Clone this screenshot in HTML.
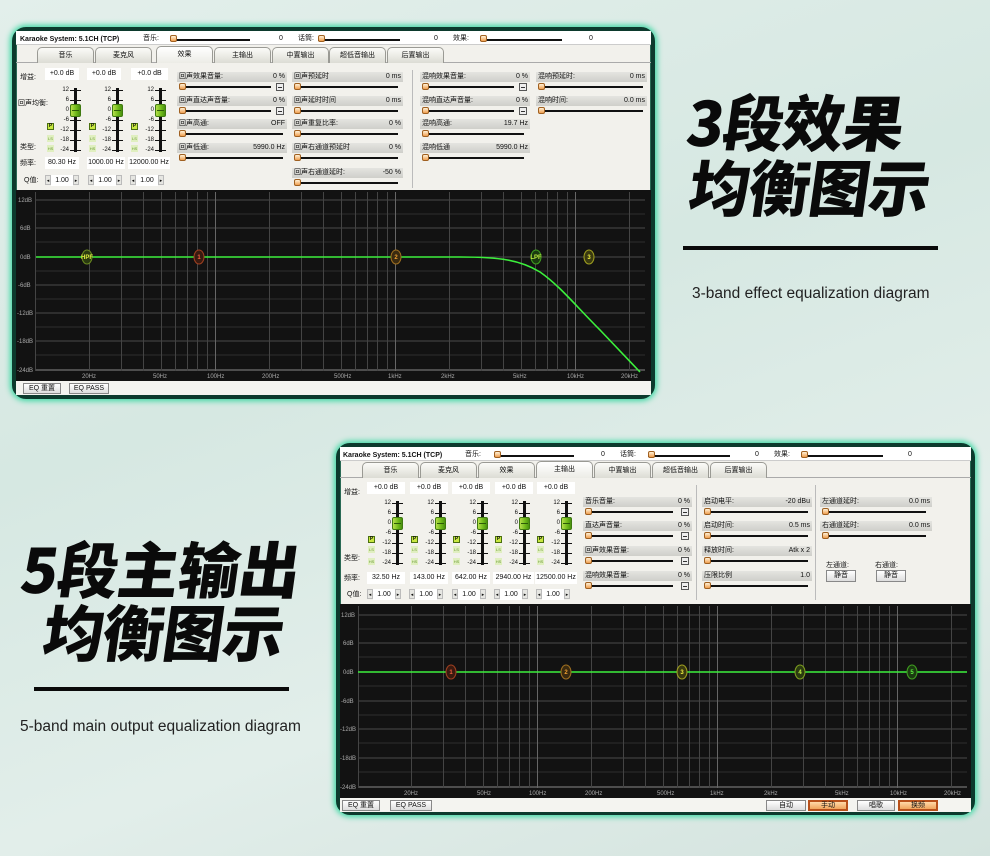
<!DOCTYPE html>
<html><head><meta charset="utf-8">
<style>
*{margin:0;padding:0;box-sizing:border-box}
body{width:990px;height:856px;overflow:hidden;position:relative;background:linear-gradient(160deg,#e3efeb 0%,#d6e8e2 40%,#e2eeea 70%,#d3e3de 100%);font-family:"Liberation Sans","Noto Sans CJK SC",sans-serif;color:#111}
.a{position:absolute}
.frame{position:absolute;border:4px solid #0c3a2d;border-radius:14px;box-shadow:0 0 6px 2px #3ed8a4,inset 0 0 0 1px #2a6a55;background:#f2f1ec;overflow:hidden}
.t7{font-size:7px;line-height:9px;white-space:nowrap}
.tb{position:absolute;height:16px;width:57px;border:1px solid #9a9a94;border-bottom:none;border-radius:5px 5px 0 0;background:linear-gradient(#fbfbf8,#dcdcd4);font-size:7px;text-align:center;line-height:15px}
.tb.on{background:linear-gradient(#ffffff,#ecece6);height:17px}
.sl{position:absolute;height:2px;background:#111}
.th{position:absolute;width:7px;height:7px;border:1px solid #a06020;border-radius:2px;background:linear-gradient(#fff2d8,#f0a050)}
.pb{position:absolute;height:21px}
.pb .lb{position:absolute;left:0;right:0;top:0;height:10px;background:linear-gradient(#e4e4e0,#cfcfca);font-size:7px;line-height:10px;padding:0 2px;white-space:nowrap}
.pb .lb span{float:right}
.pb .sl{left:2px;top:14px}
.pb .th{left:2px;top:11px}
.pb .mn{position:absolute;top:11px;width:8px;height:8px;border:1px solid #555;background:#eee}
.pb .mn:after{content:"";position:absolute;left:1px;right:1px;top:3px;height:1px;background:#333}
.vb{position:absolute;height:12px;background:#fff;font-size:7px;line-height:12px;text-align:center;white-space:nowrap}
.fd{position:absolute;width:40px;height:70px}
.fd .tk{position:absolute;left:0;top:0;width:14px;text-align:right;font-size:6px;line-height:10px;white-space:pre}
.fd .tr{position:absolute;left:19px;top:3px;width:3px;height:64px;background:#111}
.fd .ti{position:absolute;left:15px;top:5px;width:11px;height:61px;background:repeating-linear-gradient(#111 0 1px,transparent 1px 10px)}
.fd .kn{position:absolute;left:15px;top:19px;width:11px;height:13px;border:1px solid #3f7a10;border-radius:2px;background:linear-gradient(90deg,#b6e04a,#6cb818 60%,#4a9010)}
.fd .kn:after{content:"";position:absolute;left:1px;right:1px;top:5px;height:1px;background:#2d5a08}
.ic{position:absolute;width:7px;height:7px;font-size:4px;line-height:7px;text-align:center}
.ic.p{background:#c8e840;border:1px solid #4a7010;font-weight:bold;font-size:5px;line-height:5px}
.ic.s{background:#e0efc0;color:#6a9a30}
.qb{position:absolute;height:11px;font-size:7px;line-height:11px;white-space:nowrap}
.qb i{display:inline-block;width:6px;height:10px;background:#e6e6e2;border:1px solid #bbb;font-style:normal;font-size:5px;text-align:center;vertical-align:top}
.qb b{display:inline-block;width:22px;text-align:center;font-weight:normal;background:#fff}
.bt{position:absolute;height:11px;border:1px solid #888;background:linear-gradient(#fff,#ddd);font-size:7px;line-height:9px;text-align:center;white-space:nowrap}
.bt.o{background:linear-gradient(#ffd9a8,#f0a45c);border:2px solid #b8501a;line-height:7px}
.big{position:absolute;font-family:"Noto Sans CJK SC","WenQuanYi Zen Hei",sans-serif;font-weight:900;font-size:61px;line-height:61px;letter-spacing:-1px;transform:skewX(-8deg);color:#0a0a0a;white-space:nowrap}
.hr{position:absolute;height:4px;background:#0a0a0a}
.sub{position:absolute;font-family:"Liberation Sans","DejaVu Sans",sans-serif;font-size:15.5px;color:#222;white-space:nowrap}
</style></head><body>

<div class="big" style="left:688px;top:89px">3段效果</div>
<div class="big" style="left:690px;top:154px">均衡图示</div>
<div class="hr" style="left:683px;top:246px;width:255px"></div>
<div class="sub" style="left:692px;top:285px">3-band effect equalization diagram</div>

<div class="big" style="left:22px;top:536px;letter-spacing:-0.5px">5段主输出</div>
<div class="big" style="left:44px;top:599px">均衡图示</div>
<div class="hr" style="left:34px;top:687px;width:255px"></div>
<div class="sub" style="left:20px;top:718px">5-band main output equalization diagram</div>

<!-- PANEL 1 -->
<div class="frame" style="left:12px;top:27px;width:643px;height:372px"></div>
<div class="a" style="left:16px;top:31px;width:635px;height:14px;background:#fff;border-bottom:1px solid #ccc"></div>
<div class="a t7" style="left:20px;top:35px;font-weight:bold">Karaoke System: 5.1CH (TCP)</div>
<div class="a t7" style="left:143px;top:34px">音乐:</div><div class="sl" style="left:170px;top:39px;width:80px"></div><div class="th" style="left:170px;top:35px"></div><div class="a t7" style="left:279px;top:34px">0</div>
<div class="a t7" style="left:298px;top:34px">话筒:</div><div class="sl" style="left:318px;top:39px;width:82px"></div><div class="th" style="left:318px;top:35px"></div><div class="a t7" style="left:434px;top:34px">0</div>
<div class="a t7" style="left:453px;top:34px">效果:</div><div class="sl" style="left:480px;top:39px;width:82px"></div><div class="th" style="left:480px;top:35px"></div><div class="a t7" style="left:589px;top:34px">0</div>
<div class="a" style="left:16px;top:62px;width:635px;height:1px;background:#aaa"></div>
<div class="tb" style="left:37px;top:47px">音乐</div>
<div class="tb" style="left:95px;top:47px">麦克风</div>
<div class="tb on" style="left:156px;top:46px">效果</div>
<div class="tb" style="left:214px;top:47px">主输出</div>
<div class="tb" style="left:272px;top:47px">中置输出</div>
<div class="tb" style="left:329px;top:47px">超低音输出</div>
<div class="tb" style="left:387px;top:47px">后置输出</div>

<div class="a t7" style="left:20px;top:73px">增益:</div>
<div class="a t7" style="left:18px;top:99px">回声均衡:</div>
<div class="a t7" style="left:20px;top:143px">类型:</div>
<div class="a t7" style="left:20px;top:159px">频率:</div>
<div class="a t7" style="left:24px;top:176px">Q值:</div>
<div class="vb" style="left:45px;top:68px;width:34px">+0.0 dB</div>
<div class="vb" style="left:87px;top:68px;width:34px">+0.0 dB</div>
<div class="vb" style="left:131px;top:68px;width:37px">+0.0 dB</div>
<div class="fd" style="left:55px;top:85px"><div class="tk">12
6
0
-6
-12
-18
-24</div><div class="ti"></div><div class="tr"></div><div class="kn"></div></div>
<div class="fd" style="left:97px;top:85px"><div class="tk">12
6
0
-6
-12
-18
-24</div><div class="ti"></div><div class="tr"></div><div class="kn"></div></div>
<div class="fd" style="left:140px;top:85px"><div class="tk">12
6
0
-6
-12
-18
-24</div><div class="ti"></div><div class="tr"></div><div class="kn"></div></div>
<div class="ic p" style="left:47px;top:123px">P</div><div class="ic s" style="left:47px;top:135px">LS</div><div class="ic s" style="left:47px;top:145px">HS</div>
<div class="ic p" style="left:89px;top:123px">P</div><div class="ic s" style="left:89px;top:135px">LS</div><div class="ic s" style="left:89px;top:145px">HS</div>
<div class="ic p" style="left:131px;top:123px">P</div><div class="ic s" style="left:131px;top:135px">LS</div><div class="ic s" style="left:131px;top:145px">HS</div>
<div class="vb" style="left:45px;top:157px;width:34px">80.30 Hz</div>
<div class="vb" style="left:87px;top:157px;width:38px">1000.00 Hz</div>
<div class="vb" style="left:128px;top:157px;width:42px">12000.00 Hz</div>
<div class="qb" style="left:45px;top:175px"><i>◂</i><b>1.00</b><i>▸</i></div>
<div class="qb" style="left:88px;top:175px"><i>◂</i><b>1.00</b><i>▸</i></div>
<div class="qb" style="left:130px;top:175px"><i>◂</i><b>1.00</b><i>▸</i></div>

<div class="pb" style="left:177px;top:72px;width:110px"><div class="lb">回声效果音量:<span>0 %</span></div><div class="sl" style="width:92px"></div><div class="th"></div><div class="mn" style="left:99px"></div></div>
<div class="pb" style="left:177px;top:96px;width:110px"><div class="lb">回声直达声音量:<span>0 %</span></div><div class="sl" style="width:92px"></div><div class="th"></div><div class="mn" style="left:99px"></div></div>
<div class="pb" style="left:177px;top:119px;width:110px"><div class="lb">回声高通:<span>OFF</span></div><div class="sl" style="width:104px"></div><div class="th"></div></div>
<div class="pb" style="left:177px;top:143px;width:110px"><div class="lb">回声低通:<span>5990.0 Hz</span></div><div class="sl" style="width:104px"></div><div class="th"></div></div>

<div class="pb" style="left:292px;top:72px;width:111px"><div class="lb">回声预延时<span>0 ms</span></div><div class="sl" style="width:104px"></div><div class="th"></div></div>
<div class="pb" style="left:292px;top:96px;width:111px"><div class="lb">回声延时时间<span>0 ms</span></div><div class="sl" style="width:104px"></div><div class="th"></div></div>
<div class="pb" style="left:292px;top:119px;width:111px"><div class="lb">回声重复比率:<span>0 %</span></div><div class="sl" style="width:104px"></div><div class="th"></div></div>
<div class="pb" style="left:292px;top:143px;width:111px"><div class="lb">回声右通道预延时<span>0 %</span></div><div class="sl" style="width:104px"></div><div class="th"></div></div>
<div class="pb" style="left:292px;top:168px;width:111px"><div class="lb">回声右通道延时:<span>-50 %</span></div><div class="sl" style="width:104px"></div><div class="th"></div></div>
<div class="a" style="left:412px;top:70px;width:1px;height:118px;background:#bbb"></div>
<div class="pb" style="left:420px;top:72px;width:110px"><div class="lb">混响效果音量:<span>0 %</span></div><div class="sl" style="width:92px"></div><div class="th"></div><div class="mn" style="left:99px"></div></div>
<div class="pb" style="left:420px;top:96px;width:110px"><div class="lb">混响直达声音量:<span>0 %</span></div><div class="sl" style="width:92px"></div><div class="th"></div><div class="mn" style="left:99px"></div></div>
<div class="pb" style="left:420px;top:119px;width:110px"><div class="lb">混响高通:<span>19.7 Hz</span></div><div class="sl" style="width:102px"></div><div class="th"></div></div>
<div class="pb" style="left:420px;top:143px;width:110px"><div class="lb">混响低通<span>5990.0 Hz</span></div><div class="sl" style="width:102px"></div><div class="th"></div></div>
<div class="pb" style="left:536px;top:72px;width:111px"><div class="lb">混响预延时:<span>0 ms</span></div><div class="sl" style="width:105px"></div><div class="th"></div></div>
<div class="pb" style="left:536px;top:96px;width:111px"><div class="lb">混响时间:<span>0.0 ms</span></div><div class="sl" style="width:105px"></div><div class="th"></div></div>

<svg class="a" style="left:16px;top:190px" width="635" height="191" viewBox="16 190 635 191">
<rect x="16" y="190" width="635" height="191" fill="#121212"/>
<g stroke="#2e2e2e" stroke-width="1"><path d="M36 214H645M36 242H645M36 271H645M36 299H645M36 327H645M36 355H645"/></g>
<g stroke="#4a4a4a"><path d="M36 200H645M36 228H645M36 257H645M36 285H645M36 313H645M36 341H645"/></g>
<path d="M36 370H645" stroke="#888"/>
<g transform="translate(89.5 0)" stroke="#444"><path d="M-54 192V371M0 192V371M32 192V371M54 192V371M72 192V371M86 192V371M98 192V371M108 192V371M118 192V371M180 192V371M212 192V371M234 192V371M252 192V371M266 192V371M278 192V371M288 192V371M298 192V371M360 192V371M392 192V371M414 192V371M432 192V371M446 192V371M458 192V371M468 192V371M478 192V371M540 192V371"/><path d="M126 192V371M306 192V371M486 192V371" stroke="#666"/></g>
<g font-size="6" fill="#aaa" font-family="Liberation Sans"><text x="18" y="202">12dB</text><text x="20" y="230">6dB</text><text x="20" y="259">0dB</text><text x="18" y="287">-6dB</text><text x="17" y="315">-12dB</text><text x="17" y="343">-18dB</text><text x="17" y="372">-24dB</text>
<text x="82" y="378">20Hz</text><text x="153" y="378">50Hz</text><text x="207" y="378">100Hz</text><text x="262" y="378">200Hz</text><text x="334" y="378">500Hz</text><text x="388" y="378">1kHz</text><text x="441" y="378">2kHz</text><text x="513" y="378">5kHz</text><text x="567" y="378">10kHz</text><text x="621" y="378">20kHz</text></g>
<path d="M36 257H460C500 257 520 260 540 272C560 286 575 305 600 330L640 372" stroke="#3cf03c" stroke-width="1.6" fill="none"/>
<g font-size="6" font-family="Liberation Sans" text-anchor="middle" font-weight="bold">
<ellipse cx="87" cy="257" rx="5" ry="7" fill="#2a3a10" stroke="#6a8a20"/><text x="87" y="259" fill="#e0f040">HPF</text>
<ellipse cx="199" cy="257" rx="5" ry="7" fill="#3a1a10" stroke="#a04020"/><text x="199" y="259" fill="#f06040">1</text>
<ellipse cx="396" cy="257" rx="5" ry="7" fill="#3a2a10" stroke="#a07020"/><text x="396" y="259" fill="#f0a030">2</text>
<ellipse cx="536" cy="257" rx="5" ry="7" fill="#1a3a10" stroke="#40a020"/><text x="536" y="259" fill="#c0f040">LPF</text>
<ellipse cx="589" cy="257" rx="5" ry="7" fill="#3a3a10" stroke="#a0a020"/><text x="589" y="259" fill="#f0f040">3</text></g>
</svg>
<div class="a" style="left:16px;top:381px;width:635px;height:14px;background:#f4f4f0"></div>
<div class="bt" style="left:23px;top:383px;width:38px">EQ 重置</div>
<div class="bt" style="left:69px;top:383px;width:40px">EQ PASS</div>

<!-- PANEL 2 -->
<div class="frame" style="left:336px;top:443px;width:639px;height:372px"></div>
<div class="a" style="left:340px;top:447px;width:631px;height:14px;background:#fff;border-bottom:1px solid #ccc"></div>
<div class="a t7" style="left:343px;top:451px;font-weight:bold">Karaoke System: 5.1CH (TCP)</div>
<div class="a t7" style="left:465px;top:450px">音乐:</div><div class="sl" style="left:494px;top:455px;width:80px"></div><div class="th" style="left:494px;top:451px"></div><div class="a t7" style="left:601px;top:450px">0</div>
<div class="a t7" style="left:620px;top:450px">话筒:</div><div class="sl" style="left:648px;top:455px;width:82px"></div><div class="th" style="left:648px;top:451px"></div><div class="a t7" style="left:755px;top:450px">0</div>
<div class="a t7" style="left:774px;top:450px">效果:</div><div class="sl" style="left:801px;top:455px;width:82px"></div><div class="th" style="left:801px;top:451px"></div><div class="a t7" style="left:908px;top:450px">0</div>
<div class="a" style="left:340px;top:477px;width:631px;height:1px;background:#aaa"></div>
<div class="tb" style="left:362px;top:462px">音乐</div>
<div class="tb" style="left:420px;top:462px">麦克风</div>
<div class="tb" style="left:478px;top:462px">效果</div>
<div class="tb on" style="left:536px;top:461px">主输出</div>
<div class="tb" style="left:594px;top:462px">中置输出</div>
<div class="tb" style="left:652px;top:462px">超低音输出</div>
<div class="tb" style="left:710px;top:462px">后置输出</div>

<div class="a t7" style="left:344px;top:488px">增益:</div>
<div class="a t7" style="left:344px;top:554px">类型:</div>
<div class="a t7" style="left:344px;top:574px">频率:</div>
<div class="a t7" style="left:347px;top:590px">Q值:</div>
<div class="vb" style="left:367px;top:482px;width:38px">+0.0 dB</div>
<div class="vb" style="left:410px;top:482px;width:38px">+0.0 dB</div>
<div class="vb" style="left:452px;top:482px;width:38px">+0.0 dB</div>
<div class="vb" style="left:495px;top:482px;width:38px">+0.0 dB</div>
<div class="vb" style="left:537px;top:482px;width:38px">+0.0 dB</div>
<div class="fd" style="left:377px;top:498px"><div class="tk">12
6
0
-6
-12
-18
-24</div><div class="ti"></div><div class="tr"></div><div class="kn"></div></div>
<div class="fd" style="left:420px;top:498px"><div class="tk">12
6
0
-6
-12
-18
-24</div><div class="ti"></div><div class="tr"></div><div class="kn"></div></div>
<div class="fd" style="left:462px;top:498px"><div class="tk">12
6
0
-6
-12
-18
-24</div><div class="ti"></div><div class="tr"></div><div class="kn"></div></div>
<div class="fd" style="left:504px;top:498px"><div class="tk">12
6
0
-6
-12
-18
-24</div><div class="ti"></div><div class="tr"></div><div class="kn"></div></div>
<div class="fd" style="left:546px;top:498px"><div class="tk">12
6
0
-6
-12
-18
-24</div><div class="ti"></div><div class="tr"></div><div class="kn"></div></div>
<div class="ic p" style="left:368px;top:536px">P</div><div class="ic s" style="left:368px;top:546px">LS</div><div class="ic s" style="left:368px;top:558px">HS</div>
<div class="ic p" style="left:411px;top:536px">P</div><div class="ic s" style="left:411px;top:546px">LS</div><div class="ic s" style="left:411px;top:558px">HS</div>
<div class="ic p" style="left:453px;top:536px">P</div><div class="ic s" style="left:453px;top:546px">LS</div><div class="ic s" style="left:453px;top:558px">HS</div>
<div class="ic p" style="left:495px;top:536px">P</div><div class="ic s" style="left:495px;top:546px">LS</div><div class="ic s" style="left:495px;top:558px">HS</div>
<div class="ic p" style="left:537px;top:536px">P</div><div class="ic s" style="left:537px;top:546px">LS</div><div class="ic s" style="left:537px;top:558px">HS</div>
<div class="vb" style="left:367px;top:572px;width:38px">32.50 Hz</div>
<div class="vb" style="left:410px;top:572px;width:38px">143.00 Hz</div>
<div class="vb" style="left:452px;top:572px;width:38px">642.00 Hz</div>
<div class="vb" style="left:493px;top:572px;width:41px">2940.00 Hz</div>
<div class="vb" style="left:535px;top:572px;width:42px">12500.00 Hz</div>
<div class="qb" style="left:367px;top:589px"><i>◂</i><b>1.00</b><i>▸</i></div>
<div class="qb" style="left:409px;top:589px"><i>◂</i><b>1.00</b><i>▸</i></div>
<div class="qb" style="left:452px;top:589px"><i>◂</i><b>1.00</b><i>▸</i></div>
<div class="qb" style="left:494px;top:589px"><i>◂</i><b>1.00</b><i>▸</i></div>
<div class="qb" style="left:536px;top:589px"><i>◂</i><b>1.00</b><i>▸</i></div>

<div class="pb" style="left:583px;top:497px;width:109px"><div class="lb">音乐音量:<span>0 %</span></div><div class="sl" style="width:88px"></div><div class="th"></div><div class="mn" style="left:98px"></div></div>
<div class="pb" style="left:583px;top:521px;width:109px"><div class="lb">直达声音量:<span>0 %</span></div><div class="sl" style="width:88px"></div><div class="th"></div><div class="mn" style="left:98px"></div></div>
<div class="pb" style="left:583px;top:546px;width:109px"><div class="lb">回声效果音量:<span>0 %</span></div><div class="sl" style="width:88px"></div><div class="th"></div><div class="mn" style="left:98px"></div></div>
<div class="pb" style="left:583px;top:571px;width:109px"><div class="lb">混响效果音量:<span>0 %</span></div><div class="sl" style="width:88px"></div><div class="th"></div><div class="mn" style="left:98px"></div></div>
<div class="a" style="left:696px;top:485px;width:1px;height:115px;background:#bbb"></div>
<div class="pb" style="left:702px;top:497px;width:110px"><div class="lb">启动电平:<span>-20 dBu</span></div><div class="sl" style="width:104px"></div><div class="th"></div></div>
<div class="pb" style="left:702px;top:521px;width:110px"><div class="lb">启动时间:<span>0.5 ms</span></div><div class="sl" style="width:104px"></div><div class="th"></div></div>
<div class="pb" style="left:702px;top:546px;width:110px"><div class="lb">释放时间:<span>Atk x 2</span></div><div class="sl" style="width:104px"></div><div class="th"></div></div>
<div class="pb" style="left:702px;top:571px;width:110px"><div class="lb">压限比例<span>1.0</span></div><div class="sl" style="width:104px"></div><div class="th"></div></div>
<div class="a" style="left:815px;top:485px;width:1px;height:115px;background:#bbb"></div>
<div class="pb" style="left:820px;top:497px;width:112px"><div class="lb">左通道延时:<span>0.0 ms</span></div><div class="sl" style="width:104px"></div><div class="th"></div></div>
<div class="pb" style="left:820px;top:521px;width:112px"><div class="lb">右通道延时:<span>0.0 ms</span></div><div class="sl" style="width:104px"></div><div class="th"></div></div>
<div class="a t7" style="left:826px;top:561px">左通道:</div>
<div class="bt" style="left:826px;top:570px;width:30px;height:12px">静音</div>
<div class="a t7" style="left:875px;top:561px">右通道:</div>
<div class="bt" style="left:876px;top:570px;width:30px;height:12px">静音</div>

<svg class="a" style="left:340px;top:604px" width="631" height="194" viewBox="340 604 631 194">
<rect x="340" y="604" width="631" height="194" fill="#121212"/>
<g stroke="#2e2e2e"><path d="M358 629H967M358 657H967M358 686H967M358 715H967M358 743H967M358 772H967"/></g>
<g stroke="#4a4a4a"><path d="M358 615H967M358 643H967M358 672H967M358 701H967M358 729H967M358 758H967"/></g>
<path d="M358 787H967" stroke="#888"/>
<g transform="translate(411.5 0)" stroke="#444"><path d="M-53 606V788M0 606V788M32 606V788M54 606V788M72 606V788M86 606V788M98 606V788M108 606V788M118 606V788M180 606V788M212 606V788M234 606V788M252 606V788M266 606V788M278 606V788M288 606V788M298 606V788M360 606V788M392 606V788M414 606V788M432 606V788M446 606V788M458 606V788M468 606V788M478 606V788M540 606V788"/><path d="M126 606V788M306 606V788M486 606V788" stroke="#666"/></g>
<g font-size="6" fill="#aaa" font-family="Liberation Sans"><text x="341" y="617">12dB</text><text x="343" y="645">6dB</text><text x="343" y="674">0dB</text><text x="341" y="703">-6dB</text><text x="340" y="731">-12dB</text><text x="340" y="760">-18dB</text><text x="340" y="789">-24dB</text>
<text x="404" y="795">20Hz</text><text x="477" y="795">50Hz</text><text x="529" y="795">100Hz</text><text x="585" y="795">200Hz</text><text x="657" y="795">500Hz</text><text x="710" y="795">1kHz</text><text x="764" y="795">2kHz</text><text x="835" y="795">5kHz</text><text x="890" y="795">10kHz</text><text x="944" y="795">20kHz</text></g>
<path d="M358 672H967" stroke="#3cf03c" stroke-width="1.6"/>
<g font-size="6" font-family="Liberation Sans" text-anchor="middle" font-weight="bold">
<ellipse cx="451" cy="672" rx="5" ry="7" fill="#3a1a10" stroke="#a04020"/><text x="451" y="674" fill="#f06040">1</text>
<ellipse cx="566" cy="672" rx="5" ry="7" fill="#3a2a10" stroke="#a07020"/><text x="566" y="674" fill="#f0a030">2</text>
<ellipse cx="682" cy="672" rx="5" ry="7" fill="#3a3a10" stroke="#a0a020"/><text x="682" y="674" fill="#f0f040">3</text>
<ellipse cx="800" cy="672" rx="5" ry="7" fill="#2a3a10" stroke="#80a020"/><text x="800" y="674" fill="#c0f040">4</text>
<ellipse cx="912" cy="672" rx="5" ry="7" fill="#1a3a10" stroke="#40a020"/><text x="912" y="674" fill="#60f040">5</text></g>
</svg>
<div class="a" style="left:340px;top:798px;width:631px;height:14px;background:#f4f4f0"></div>
<div class="bt" style="left:342px;top:800px;width:38px">EQ 重置</div>
<div class="bt" style="left:390px;top:800px;width:42px">EQ PASS</div>
<div class="bt" style="left:766px;top:800px;width:40px">自动</div>
<div class="bt o" style="left:808px;top:800px;width:40px">手动</div>
<div class="bt" style="left:857px;top:800px;width:38px">唱歌</div>
<div class="bt o" style="left:898px;top:800px;width:40px">换频</div>
</body></html>
